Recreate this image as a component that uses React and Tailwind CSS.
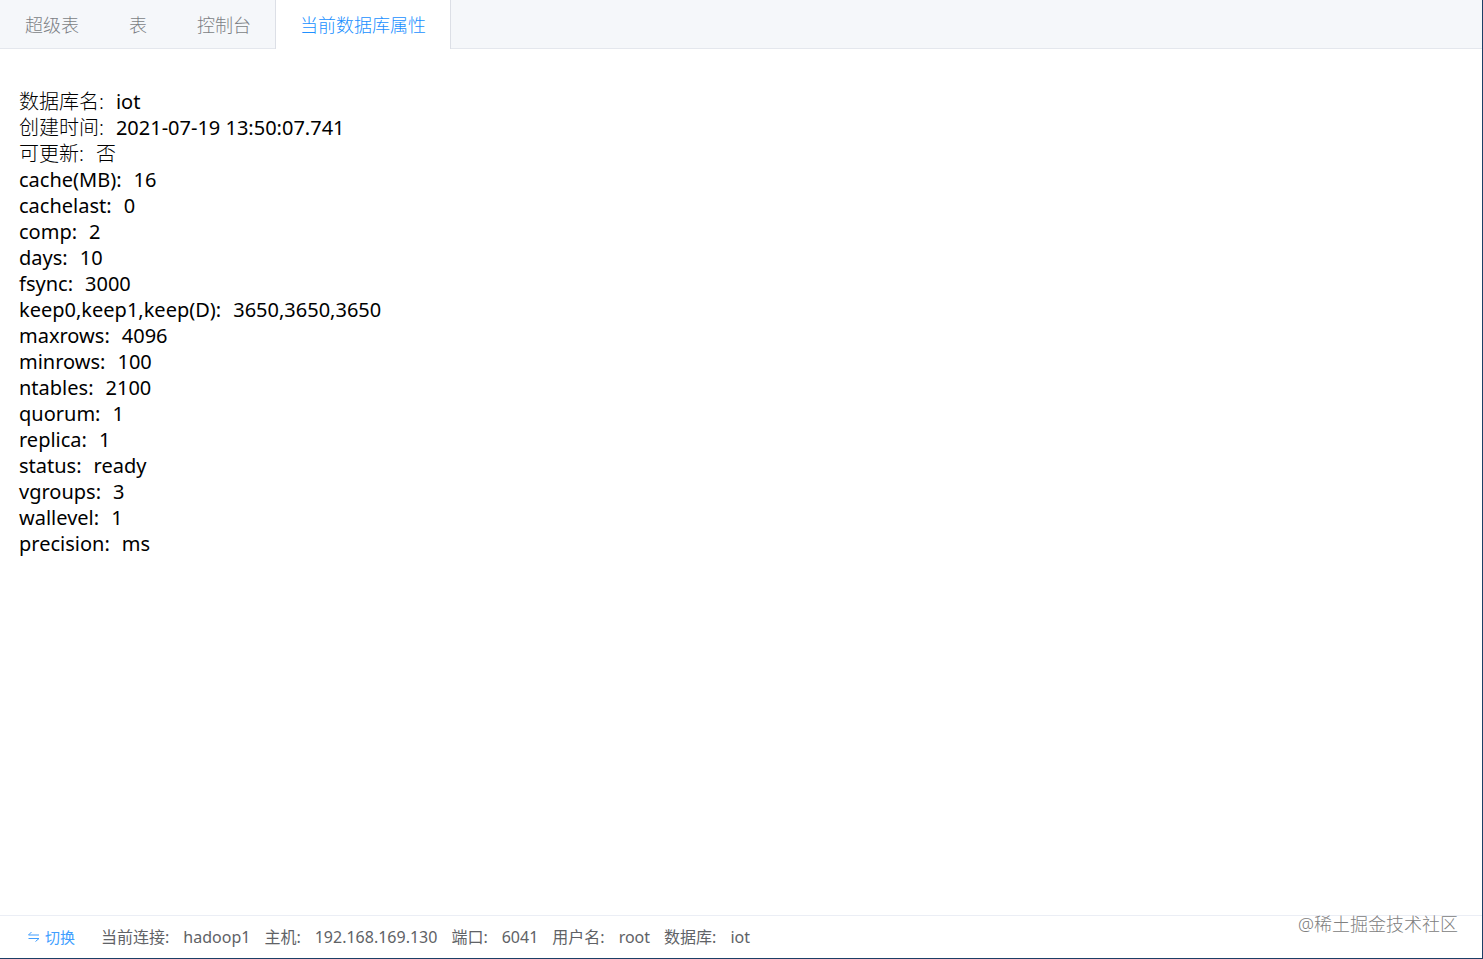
const tabs = ['超级表', '表', '控制台', '当前数据库属性']

const properties = [
  ['数据库名', 'iot'],
  ['创建时间', '2021-07-19 13:50:07.741'],
  ['可更新', '否'],
  ['cache(MB)', '16'],
  ['cachelast', '0'],
  ['comp', '2'],
  ['days', '10'],
  ['fsync', '3000'],
  ['keep0,keep1,keep(D)', '3650,3650,3650'],
  ['maxrows', '4096'],
  ['minrows', '100'],
  ['ntables', '2100'],
  ['quorum', '1'],
  ['replica', '1'],
  ['status', 'ready'],
  ['vgroups', '3'],
  ['wallevel', '1'],
  ['precision', 'ms'],
]

const connection = [
  ['当前连接', 'hadoop1'],
  ['主机', '192.168.169.130'],
  ['端口', '6041'],
  ['用户名', 'root'],
  ['数据库', 'iot'],
]

// Chinese glyphs look heavy next to the latin ones, so they get the light cut
const weight = (text) => (/[\u4e00-\u9fff]/.test(text) ? 'font-light' : 'font-normal')

function SwitchIcon() {
  return (
    <svg viewBox="0 0 14 12" className="w-[14px] h-3" fill="none" stroke="currentColor" strokeWidth="1">
      <path d="M4.5 1 1.5 4H12M8.5 10.5 12 7.5H1.5" />
    </svg>
  )
}

export default function App() {
  const active = 3

  return (
    <div className="relative flex flex-col min-h-screen bg-white text-black border-r border-b border-[#1d3f66] font-['Noto_Sans','Noto_Sans_CJK_SC',sans-serif]">
      <nav role="tablist" className="flex h-[49px] bg-[#f5f7fa] border-b border-[#e4e7ed]">
        {tabs.map((tab, i) => (
          <button
            key={tab}
            type="button"
            role="tab"
            aria-selected={i === active}
            className={
              i === active
                ? 'h-[49px] -ml-px px-6 text-lg font-light bg-white text-[#2090ff] border-x border-[#dcdfe6]'
                : 'h-[49px] px-[25px] text-lg font-light text-[#7c7f85]'
            }
          >
            {tab}
          </button>
        ))}
      </nav>

      <main className="flex-1 px-[19px] pt-10">
        <dl className="text-xl leading-[26px]">
          {properties.map(([name, value]) => (
            <div key={name} className="flex gap-3">
              <dt className={weight(name)}>{name}:</dt>
              <dd className={weight(value)}>{value}</dd>
            </div>
          ))}
        </dl>
      </main>

      <footer className="flex items-center h-[43px] pl-[27px] text-base text-[#606266] border-t border-[#ebeef5]">
        <button type="button" className="flex items-center gap-1 mr-[26px] text-[15px] text-[#409eff]">
          <SwitchIcon />
          切换
        </button>
        <dl className="flex gap-3.5">
          {connection.map(([name, value]) => (
            <div key={name} className="flex gap-3.5">
              <dt>{name}:</dt>
              <dd>{value}</dd>
            </div>
          ))}
        </dl>
      </footer>

      <span className="absolute right-6 bottom-5 text-lg font-light text-[#808080]">@稀土掘金技术社区</span>
    </div>
  )
}
